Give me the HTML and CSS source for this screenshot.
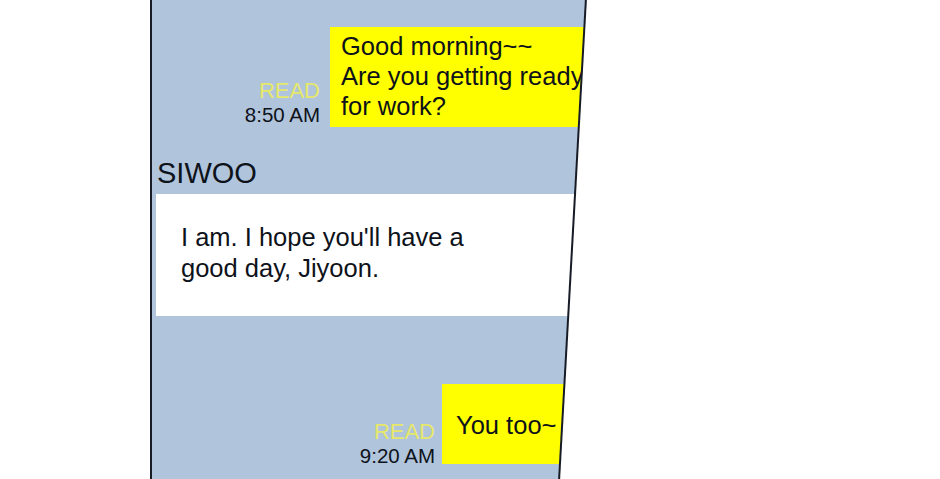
FILE: index.html
```html
<!DOCTYPE html>
<html>
<head>
  <meta name="viewport" content="width=device-width, initial-scale=1.0">
  <title>Chat</title>
  <link rel="stylesheet" href="styles.css">
</head>
<body>
  <div class="frame">
    <div class="chat">
      <div class="row row-first">
        <div class="meta">
          <span class="read">READ</span>
          <span class="time">8:50 AM</span>
        </div>
        <div class="bubble bubble-me">Good morning~~<br>Are you getting ready<br>for work?</div>
      </div>

      <div class="name">SIWOO</div>
      <div class="bubble bubble-them">I am. I hope you'll have a<br>good day, Jiyoon.</div>

      <div class="row row-last">
        <div class="meta meta-low">
          <span class="read">READ</span>
          <span class="time">9:20 AM</span>
        </div>
        <div class="bubble bubble-me bubble-short">You too~</div>
      </div>
    </div>
    <svg class="edge" width="440" height="479" viewBox="0 0 440 479">
      <line x1="436" y1="-2" x2="409" y2="481" stroke="#161b26" stroke-width="2" />
    </svg>
  </div>
</body>
</html>
```

FILE: styles.css
```css
body {
  margin: 0;
  padding: 0;
  background: #ffffff;
  font-family: "Liberation Sans", Arial, sans-serif;
  color: #0e121a;
}

.frame {
  position: relative;
  width: 440px;
  height: 479px;
  margin-left: 150px;
}

.chat {
  display: flex;
  flex-direction: column;
  height: 479px;
  overflow: hidden;
  background-color: #b0c4dc;
  border-left: 2px solid #161b26;
  clip-path: polygon(0 0, 436px 0, 409px 100%, 0 100%);
}

.edge {
  position: absolute;
  top: 0;
  left: 0;
  pointer-events: none;
}

.row {
  display: flex;
  justify-content: flex-end;
  align-items: flex-end;
}

.row-first {
  margin-top: 27px;
}

.row-last {
  margin-top: 68px;
}

.meta {
  display: flex;
  flex-direction: column;
  align-items: flex-end;
  margin-right: 10px;
}

.meta-low {
  margin-right: 7px;
  margin-bottom: -4px;
}

.read {
  font-size: 22px;
  line-height: 25.5px;
  color: #e6e86a;
}

.time {
  font-size: 20.5px;
  line-height: 24px;
  color: #0e121a;
}

.bubble {
  font-size: 25.5px;
  line-height: 30px;
  white-space: nowrap;
}

.bubble-me {
  width: 249px;
  padding: 4px 0 6px 11px;
  background-color: #ffff00;
}

.bubble-short {
  width: 134px;
  padding: 26px 0 24px 14px;
}

.name {
  margin-top: 30px;
  margin-left: 5px;
  font-size: 29px;
  line-height: 32px;
}

.bubble-them {
  margin-top: 5px;
  margin-left: 4px;
  padding: 28px 0 32px 25px;
  line-height: 31px;
  background-color: #ffffff;
}
```
